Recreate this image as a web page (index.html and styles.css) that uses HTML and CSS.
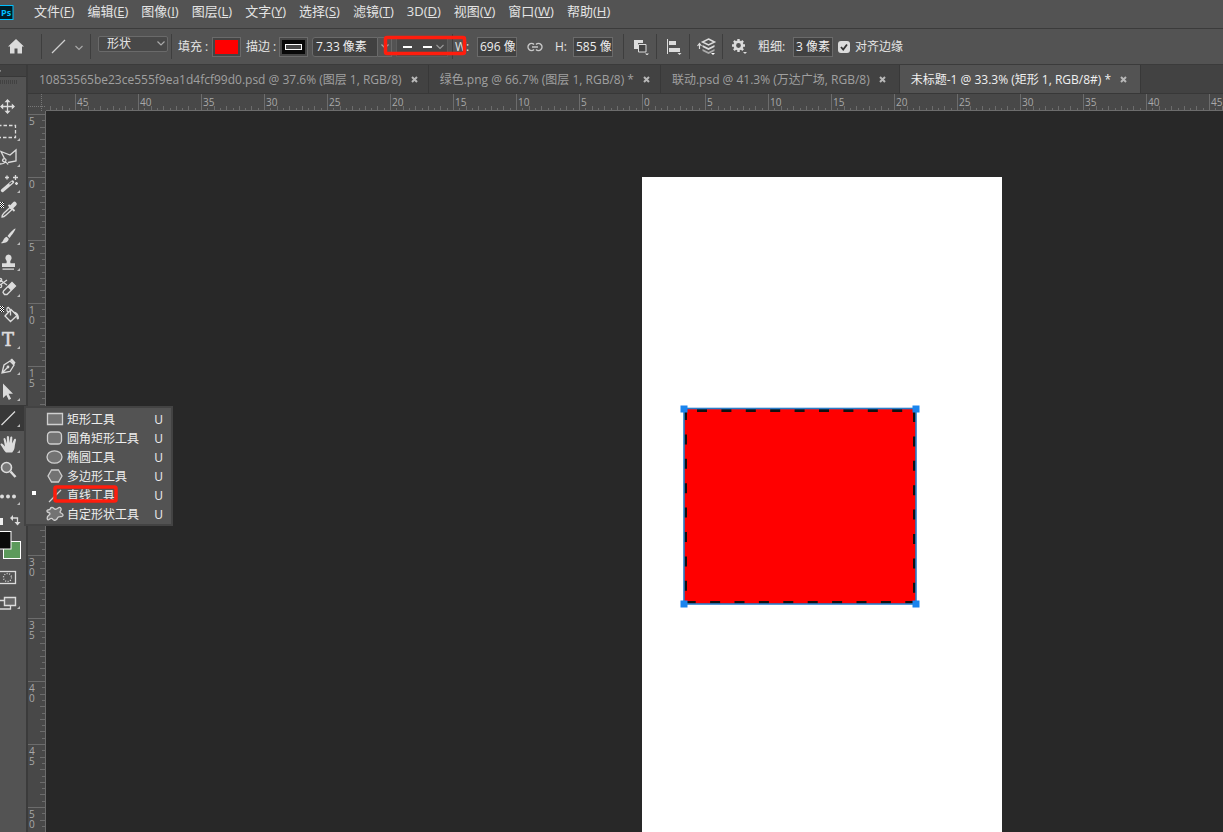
FILE: index.html
```html
<!DOCTYPE html>
<html lang="zh-CN">
<head>
<meta charset="utf-8">
<title>未标题-1 @ 33.3%</title>
<link rel="stylesheet" href="styles.css">
</head>
<body>
<div class="app">
  <header class="menubar">
    <svg class="logo" width="14" height="15" viewBox="0 0 14 15" aria-hidden="true"><rect x="-2" y=".5" width="15" height="14" fill="#001d26" stroke="#00c0ff"/><text x="1" y="11" class="logo-text">Ps</text></svg>
    <nav class="menus">
      <button>文件(<u>F</u>)</button><button>编辑(<u>E</u>)</button><button>图像(<u>I</u>)</button><button>图层(<u>L</u>)</button><button>文字(<u>Y</u>)</button><button>选择(<u>S</u>)</button><button>滤镜(<u>T</u>)</button><button>3D(<u>D</u>)</button><button>视图(<u>V</u>)</button><button>窗口(<u>W</u>)</button><button>帮助(<u>H</u>)</button>
    </nav>
  </header>

  <section class="options">
    <button class="icon home" aria-label="主页"><svg width="16" height="15" viewBox="0 0 16 15"><path d="M8 0 0 7.500h2V14.500h4.500V9.500h3v5H14V7.500h2z" fill="#dcdcdc"/></svg></button>
    <i class="sep sep-home"></i>
    <button class="icon preset" aria-label="工具预设"><svg width="32" height="16" viewBox="0 0 32 16" fill="none"><path d="M1 14 14 1" stroke="#d0d0d0" stroke-width="1.300"/><path d="m24.500 7 3.500 3.500L31.500 7" stroke="#a8a8a8" stroke-width="1.200"/></svg></button>
    <i class="sep sep-preset"></i>
    <span class="mode"><select aria-label="工具模式"><option>形状</option></select><svg class="chev" width="8" height="5" viewBox="0 0 8 5"><path d="M.5.5 4 4 7.500.5"/></svg></span>
    <i class="sep sep-mode"></i>
    <label class="cap cap-fill" for="fill">填充 :</label>
    <button class="swatch" id="fill"><span class="fill-red"></span></button>
    <label class="cap cap-stroke" for="stroke">描边 :</label>
    <button class="swatch" id="stroke"><span class="fill-line"></span></button>
    <span class="combo"><input class="field" aria-label="描边宽度" value="7.33 像素"><button aria-label="宽度选项"><svg width="8" height="5" viewBox="0 0 8 5"><path d="M.5.5 4 4 7.500.5"/></svg></button></span>
    <button class="dash" aria-label="描边类型"><svg width="50" height="18" viewBox="0 0 50 18" fill="none"><path d="M6 9h9M26 9h9" stroke="#fff" stroke-width="2"/><path d="M39.500 7 43 10.500 46.500 7" stroke="#999" stroke-width="1.200"/></svg>
      <svg class="mark mark-dash" viewBox="0 0 83 20" width="83" height="20"><rect x="1.500" y="1.500" width="79" height="16" rx="1.500"/></svg></button>
    <i class="sep sep-dash"></i>
    <label class="cap cap-w" for="w">W:</label><input class="field size" id="w" value="696 像素">
    <button class="icon link" aria-label="链接"><svg width="16" height="10" viewBox="0 0 16 10" fill="none" stroke="#c8c8c8" stroke-width="1.500"><path d="M7 2.500A3.500 3.500 0 1 0 7 7.500M9 2.500a3.500 3.500 0 1 1 0 5M5 5h6"/></svg></button>
    <label class="cap cap-h" for="h">H:</label><input class="field size" id="h" value="585 像素">
    <i class="sep sep-size"></i>
    <button class="icon tool-btn" aria-label="路径操作"><svg width="16" height="16" viewBox="0 0 16 16"><path d="M1 1h9v3H5v6H1z" fill="#dcdcdc"/><path d="M5.500 5.500h7.500V13H5.500z" fill="#444" stroke="#dcdcdc"/><path d="M12 14.500h4l-2 2z" fill="#ddd"/></svg></button>
    <i class="sep sep-op"></i>
    <button class="icon tool-btn" aria-label="路径对齐"><svg width="16" height="16" viewBox="0 0 16 16"><path d="M1 0h1v15H1zM3 2h7v4H3zM3 9h11v4H3z" fill="#dcdcdc"/><path d="M11.500 14h4l-2 2z" fill="#ddd"/></svg></button>
    <i class="sep sep-op"></i>
    <button class="icon arrange" aria-label="路径排列"><svg width="20" height="17" viewBox="0 0 20 17"><path d="M2.500 11V6M.5 8l2-2.500 2 2.500" fill="none" stroke="#dcdcdc" stroke-width="1.200"/><path d="m11.500 1 6 3-6 3-6-3z" fill="none" stroke="#dcdcdc" stroke-width="1.500"/><path d="m5.500 7 6 3 6-3v2l-6 3-6-3z" fill="#dcdcdc"/><path d="m5.500 11 6 3 6-3v2l-6 3-6-3z" fill="#aaa"/><path d="M14 15h4l-2 2z" fill="#fff"/></svg></button>
    <i class="sep sep-arrange"></i>
    <button class="icon gear" aria-label="设置"><svg width="17" height="17" viewBox="0 0 17 17"><g fill="none" stroke="#dcdcdc"><circle cx="7.500" cy="7.500" r="3.700" stroke-width="2.600"/><path d="M7.500 1v2.500M7.500 11.500V14M1 7.500h2.500M11.500 7.500H14M2.900 2.900l1.700 1.700M10.400 10.400l1.700 1.700M12.100 2.900l-1.700 1.700M4.600 10.400l-1.700 1.700" stroke-width="2.400"/></g><path d="M12 14h4l-2 2z" fill="#ddd"/></svg></button>
    <label class="cap cap-weight" for="weight">粗细:</label><input class="field size weight" id="weight" value="3 像素">
    <label class="check"><input type="checkbox" checked><svg width="12" height="12" viewBox="0 0 12 12"><path d="m3 6 2.200 2.500L9 3.500"/></svg><span>对齐边缘</span></label>
  </section>

  <main class="work">
    <aside class="tools">
      <div class="tools-head"><svg width="26" height="11" viewBox="0 0 26 11"><path d="m-2 8 3-2.500" stroke="#bbb" fill="none"/></svg></div>
      <div class="grip"></div>
      <button aria-label="移动"><svg viewBox="0 0 26 26"><path class="ln" d="M7.500 7v13M1 13.500h13"/><path class="so" d="m7.500 6 3 3.200h-6zM7.500 21l3-3.200h-6zM0 13.500l3.200-3v6zM15 13.500l-3.200-3v6z"/></svg></button>
      <button class="more" aria-label="选框"><svg viewBox="0 0 26 26"><rect class="ln" x="-2" y="6.500" width="17.500" height="12" stroke-dasharray="3.500 2"/></svg></button>
      <button class="more" aria-label="套索"><svg viewBox="0 0 26 26"><path class="ln" d="M4.500 13.500 1 6.500l9 3.500 6-5v11l-8 1.500"/><path class="ln" d="M0 19c3 0 6-1.500 6-4 0-2-3.500-1.500-3.500.5S7 16 8 19.500"/></svg></button>
      <button class="more" aria-label="魔棒"><svg viewBox="0 0 26 26"><path d="m2.500 19.500 10-8.500" stroke="#dcdcdc" stroke-width="3.400" stroke-linecap="round"/><path d="m9.500 13.200 2.600-2.200" stroke="#555" stroke-width="1.300"/><path class="ln" d="M7 4.500v4M5 6.500h4M15.500 4v5M13 6.500h5M16.500 11v3M15 12.500h3"/></svg></button>
      <button aria-label="吸管"><svg viewBox="0 0 26 26"><path d="M0 5h4v6H0z" fill="#111"/><path d="M0 5h1v1H0zM2 5h1v1H2zM1 6h1v1H1zM3 6h1v1H3zM0 7h1v1H0zM2 7h1v1H2zM1 8h1v1H1zM3 8h1v1H3zM0 9h1v1H0zM2 9h1v1H2zM1 10h1v1H1zM3 10h1v1H3z" fill="#fff"/><path class="ln" d="M2 20c0-2 1-3 2-4l6-5.500 2 2-6 5.500c-1 1-2 2-4 2z"/><path d="m11.500 10 3-3" stroke="#dcdcdc" stroke-width="4.500" stroke-linecap="round"/><path d="m8.500 8 6 6" stroke="#dcdcdc" stroke-width="1.800"/></svg></button>
      <button class="more" aria-label="画笔"><svg viewBox="0 0 26 26"><path class="so" d="M15.500 5.500c.5 1-4 7-6 9.500l-2-2c2-3 7-8 8-7.500zM6.700 13.800l2 2c0 3-4 5-8 4.200 3-1 2.500-5.500 6-6.200z"/></svg></button>
      <button class="more" aria-label="图章"><svg viewBox="0 0 26 26"><path class="so" d="M8.500 5.500a3.500 3.500 0 0 1 2.500 5.500c-1 1.200-.8 2-.5 3.200H15v3.800H2v-3.800h4.500c.3-1.200.5-2-.5-3.200A3.500 3.500 0 0 1 8.500 5.500zM2.500 19.500h11.500v1.300H2.500z"/></svg></button>
      <button class="more" aria-label="橡皮擦"><svg viewBox="0 0 26 26"><path class="ln" d="m3.500 16 8.500-8.500 3.500 3.500L7 19.500H4.500l-1.500-2z"/><path class="so" d="m7.500 12 4.500-4.500 3.500 3.500-4.500 4.500z"/><path class="ln" d="m0 5 7 5M0 10l7-5"/><circle class="ln" cx="0" cy="5" r="1.700"/><circle class="ln" cx="0" cy="11" r="1.700"/></svg></button>
      <button aria-label="油漆桶"><svg viewBox="0 0 26 26"><path d="M0 5h4v6H0z" fill="#111"/><path d="M0 5h1v1H0zM2 5h1v1H2zM1 6h1v1H1zM3 6h1v1H3zM0 7h1v1H0zM2 7h1v1H2zM1 8h1v1H1zM3 8h1v1H3zM0 9h1v1H0zM2 9h1v1H2zM1 10h1v1H1zM3 10h1v1H3z" fill="#fff"/><path class="ln" d="m5 15 6-6.500 6 6-6.500 6zM10.500 14.500V9L8.500 6.500C6.500 6 6.500 10 8 11.500"/><path class="so" d="M13 10.500c4 0 6 3 6 7-1.500 2.500-3 0-2.500-2.500z"/></svg></button>
      <button class="more" aria-label="文字"><svg viewBox="0 0 26 26"><text x="2" y="19" class="tee">T</text></svg></button>
      <button class="more" aria-label="钢笔"><svg viewBox="0 0 26 26"><path class="ln" d="M2 20 4 12l6-4 4 4-4 6.500zM2 20l5.500-5.500"/><circle class="so" cx="8" cy="14" r="1.400"/><path class="so" d="m10 7 2-1.500 3.500 4L14 12z"/></svg></button>
      <button class="more" aria-label="选择"><svg viewBox="0 0 26 26"><path class="so" d="M3 4.500v14.500l3.300-3 2.500 5 2.300-1.200-2.600-5H13z"/></svg></button>
      <button class="more active" aria-label="直线"><svg viewBox="0 0 26 26"><path class="ln" d="M1.500 20 15 6.500"/></svg></button>
      <button class="more" aria-label="抓手"><svg viewBox="0 0 26 26"><path class="so" d="M6 21.500c-2-2-3.500-5-5.500-7.800 0-1.400 1.600-1.400 2.400-.4L5 15.500 3.500 8c.2-1.200 1.700-1.200 2 0L7 12.500 6.800 6c.3-1.300 2-1.300 2.200 0l.5 6 .8-5.800c.4-1.200 2-1 2 .3l-.2 6L14 8.500c.6-1.200 2.200-.6 2 .6-.6 2.400-1 4.400-1.400 7.400-.3 2-1.200 3.500-2.400 5z"/></svg></button>
      <button aria-label="缩放"><svg viewBox="0 0 26 26"><circle cx="6.500" cy="10.500" r="5" fill="#777" stroke="#dcdcdc" stroke-width="1.600"/><path d="m10.500 14.500 5 5.500" stroke="#dcdcdc" stroke-width="2.500"/></svg></button>
      <button class="more" aria-label="更多"><svg viewBox="0 0 26 26"><g class="so"><circle cx="2" cy="13.500" r="2"/><circle cx="8" cy="13.500" r="2"/><circle cx="14" cy="13.500" r="2"/></g></svg></button>
      <div class="colors"><svg width="26" height="52" viewBox="0 0 26 52"><path d="M0 9h3v7H0z" fill="#eee"/><path class="ln" d="M12 9h5.500v6"/><path class="so" d="m13 6-3 3 3 3zM14.500 13h6l-3 3.500z"/><rect x="3.500" y="32.500" width="17" height="17" fill="#5c9a5b" stroke="#fff"/><rect x="-7.500" y="22.500" width="18.500" height="17.500" fill="#0b0b0b" stroke="#fff"/></svg></div>
      <button aria-label="快速蒙版"><svg viewBox="0 0 26 26"><rect class="ln" x="-2" y="10.500" width="17.500" height="12"/><circle class="ln" cx="7.500" cy="16.500" r="4" stroke-dasharray="1 1.500"/></svg></button>
      <button class="more" aria-label="屏幕模式"><svg viewBox="0 0 26 26"><path d="M-2 13.500h12.500V22H-2z" class="ln"/><path d="M4.500 10.500h11v8h-11z" fill="#666" stroke="#dcdcdc" stroke-width="1.400"/></svg></button>
    </aside>

    <section class="document">
      <div class="tabs">
        <div class="tab"><span>10853565be23ce555f9ea1d4fcf99d0.psd @ 37.6% (图层 1, RGB/8)</span><button aria-label="关闭"><svg viewBox="0 0 7 7"><path d="m1 1 5 5M6 1 1 6"/></svg></button></div>
        <div class="tab"><span>绿色.png @ 66.7% (图层 1, RGB/8) *</span><button aria-label="关闭"><svg viewBox="0 0 7 7"><path d="m1 1 5 5M6 1 1 6"/></svg></button></div>
        <div class="tab"><span>联动.psd @ 41.3% (万达广场, RGB/8)</span><button aria-label="关闭"><svg viewBox="0 0 7 7"><path d="m1 1 5 5M6 1 1 6"/></svg></button></div>
        <div class="tab current"><span>未标题-1 @ 33.3% (矩形 1, RGB/8#) *</span><button aria-label="关闭"><svg viewBox="0 0 7 7"><path d="m1 1 5 5M6 1 1 6"/></svg></button></div>
      </div>
      <div class="stage">
        <svg class="corner" viewBox="0 0 18 17"><path d="M13.500 0v17M0 12.500h18" stroke="#777" stroke-dasharray="1 1"/></svg>
        <svg class="ruler ruler-x">
          <defs><pattern id="tx" x="29" width="63" height="17" patternUnits="userSpaceOnUse"><path d="M.5 0v17M6.500 14v3M13.500 12v5M19.500 14v3M25.500 12v5M32.500 14v3M38.500 12v5M44.500 14v3M50.500 12v5M57.500 14v3"/></pattern></defs>
          <rect width="100%" height="17" fill="url(#tx)"/>
          <text x="31" y="12">45</text><text x="94" y="12">40</text><text x="157" y="12">35</text><text x="220" y="12">30</text><text x="283" y="12">25</text><text x="346" y="12">20</text><text x="409" y="12">15</text><text x="472" y="12">10</text><text x="535" y="12">5</text><text x="598" y="12">0</text><text x="661" y="12">5</text><text x="724" y="12">10</text><text x="787" y="12">15</text><text x="850" y="12">20</text><text x="913" y="12">25</text><text x="976" y="12">30</text><text x="1039" y="12">35</text><text x="1102" y="12">40</text><text x="1165" y="12">45</text>
        </svg>
        <svg class="ruler ruler-y">
          <defs><pattern id="ty" y="3" width="18" height="63" patternUnits="userSpaceOnUse"><path d="M0 .5h18M14 6.500h4M12 13.500h6M14 19.500h4M12 25.500h6M14 32.500h4M12 38.500h6M14 44.500h4M12 50.500h6M14 57.500h4"/></pattern></defs>
          <rect width="18" height="100%" fill="url(#ty)"/>
          <text x="1" y="14">5</text><text x="1" y="77">0</text><text x="1" y="140">5</text>
          <text x="1" y="203">1<tspan x="1" dy="10">0</tspan></text><text x="1" y="266">1<tspan x="1" dy="10">5</tspan></text><text x="1" y="329">2<tspan x="1" dy="10">0</tspan></text><text x="1" y="392">2<tspan x="1" dy="10">5</tspan></text><text x="1" y="455">3<tspan x="1" dy="10">0</tspan></text><text x="1" y="518">3<tspan x="1" dy="10">5</tspan></text><text x="1" y="581">4<tspan x="1" dy="10">0</tspan></text><text x="1" y="644">4<tspan x="1" dy="10">5</tspan></text><text x="1" y="707">5<tspan x="1" dy="10">0</tspan></text>
        </svg>
        <div class="canvas">
          <div class="artboard">
            <svg class="shape" width="242" height="206" viewBox="0 0 242 206">
              <rect x="5" y="5" width="232" height="195" fill="#f00"/>
              <g fill="none" stroke="#111" stroke-width="3" stroke-dasharray="10 14.400"><path d="M18 6.500h218"/><path d="M6.500 7v193" stroke-dashoffset="1"/><path d="M8 198.500h228" stroke-dashoffset="1.300"/><path d="M235.500 8v192" stroke-dashoffset="0"/></g>
              <rect x="5" y="4.500" width="232" height="195.500" fill="none" stroke="#2a7cc8" stroke-width="1.600"/>
              <path d="M1.500 1.500h7v7h-7zM233.500 1.500h7v7h-7zM1.500 196.500h7v7h-7zM233.500 196.500h7v7h-7z" fill="#1a84ee"/>
            </svg>
          </div>
        </div>
      </div>
    </section>

    <div class="flyout" role="menu">
      <button role="menuitem"><svg viewBox="0 0 18 16"><path d="M1.500 2.500h15v11h-15z"/></svg><span>矩形工具</span><kbd>U</kbd></button>
      <button role="menuitem"><svg viewBox="0 0 18 16"><rect x="1.500" y="2" width="14" height="12" rx="3.500"/></svg><span>圆角矩形工具</span><kbd>U</kbd></button>
      <button role="menuitem"><svg viewBox="0 0 18 16"><ellipse cx="8.500" cy="8" rx="7.500" ry="6.200"/></svg><span>椭圆工具</span><kbd>U</kbd></button>
      <button role="menuitem"><svg viewBox="0 0 18 16"><path d="M5.500 2h7L16 8l-3.500 6h-7L2 8z"/></svg><span>多边形工具</span><kbd>U</kbd></button>
      <button role="menuitem" class="chosen"><svg viewBox="0 0 18 16"><path d="M3 15 15 3"/></svg><span>直线工具</span><kbd>U</kbd><svg class="mark mark-line" viewBox="0 0 66 18"><rect x="2" y="2" width="61" height="14" rx="1.500"/></svg></button>
      <button role="menuitem"><svg viewBox="0 0 18 16"><path d="M5 1.500c3-1 3 3 5.500 1.500S14 .5 15 2.500 12.500 6 15 7s2.500 3 1 3.500-4-.5-4.500 1.500S8 15 7 13.500 5 12 3 13.500.5 11 2.500 9.500 4.500 7 2.500 6.500.5 4 2 4 4.500 4 5 1.500z"/></svg><span>自定形状工具</span><kbd>U</kbd></button>
    </div>
  </main>
</div>
</body>
</html>
```

FILE: styles.css
```css
* { box-sizing: border-box; }
body {
  margin: 0;
  background: #535353;
  color: #e4e4e4;
  font-family: "Open Sans", "Noto Sans CJK SC", sans-serif;
  font-size: 12px;
}
button, input, select, kbd { font: inherit; color: inherit; }
button { margin: 0; padding: 0; border: 0; background: none; }
svg { display: block; flex: none; }
.app { display: flex; flex-direction: column; height: 100vh; overflow: hidden; }

.menubar { display: flex; align-items: center; height: 29px; flex: none; padding-bottom: 4px; border-bottom: 1px solid #3b3b3b; }
.logo-text { font: bold 9px "Open Sans", sans-serif; fill: #00c0ff; }
.menus { display: flex; margin-left: 14px; }
.menus button { padding: 0 7px 2px 6px; font-size: 13px; line-height: 20px; white-space: nowrap; }
.menus u { text-underline-offset: 1px; }

.options { display: flex; align-items: center; height: 36px; flex: none; border-bottom: 1px solid #3b3b3b; line-height: 18px; white-space: nowrap; }
.options > * { flex: none; }
.sep { width: 1px; height: 25px; background: #3e3e3e; }
.home { margin-left: 8px; }
.sep-home { margin-left: 17px; }
.preset { margin-left: 9px; }
.sep-preset { margin-left: 7px; }
.mode { position: relative; margin: 0 0 5px 7px; }
.mode select { display: block; width: 70px; height: 16px; padding: 0 8px; appearance: none; background: #484848; border: 1px solid #6a6a6a; border-radius: 2px; line-height: 14px; }
.chev { position: absolute; right: 3px; top: 5px; }
.chev path, .combo path { fill: none; stroke: #aaa; stroke-width: 1.2; }
.sep-mode { margin-left: 3px; }
.cap-fill { width: 34px; margin-left: 6px; }
.cap-stroke { width: 33px; margin-left: 5px; }
.swatch { display: flex; width: 29px; height: 20px; padding: 2px; border: 1px solid #6a6a6a; background: #444; }
.swatch span { flex: 1; align-self: stretch; }
.fill-red { background: #f00; }
.fill-line { display: flex; padding: 4px 3px; background: #080808; }
.fill-line::before { content: ""; flex: 1; background: #484848; border: 1px solid #fff; }
.combo { display: flex; width: 80px; height: 20px; margin-left: 4px; }
.field { min-width: 0; height: 20px; padding: 0 0 2px 2px; border: 1px solid #6a6a6a; background: #414141; border-radius: 0; outline: 0; color: #eee; }
.combo .field { width: 66px; padding-left: 3px; border-radius: 3px 0 0 3px; }
.combo button { display: grid; place-items: center; width: 14px; border: 1px solid #6a6a6a; border-left: 0; }
.dash { position: relative; width: 50px; height: 18px; margin-left: 5px; background: #484848; outline: 1px solid #5c5c5c; }
.mark { position: absolute; overflow: visible; }
.mark rect { fill: none; stroke: #ff1d0d; stroke-width: 3.5; }
.mark-dash { left: -13px; top: -2px; z-index: 2; }
.sep-dash { margin-left: 5px; }
.cap-w { width: 22px; margin-left: 2px; }
.size { width: 40px; }
.link { margin-left: 10px; }
.cap-h { width: 18px; margin-left: 12px; }
.sep-size { margin-left: 10px; }
.tool-btn { margin-left: 9px; }
.sep-op { margin-left: 7px; }
.arrange { margin-left: 7px; }
.sep-arrange { margin-left: 5px; }
.gear { margin-left: 8px; }
.cap-weight { width: 35px; margin-left: 10px; }
.check { position: relative; display: flex; align-items: center; gap: 5px; margin-left: 5px; }
.check input { width: 12px; height: 12px; margin: 0; appearance: none; background: #dcdcdc; border-radius: 3px; }
.check svg { position: absolute; left: 0; }
.check path { fill: none; stroke: #333; stroke-width: 1.8; }

.work { position: relative; display: flex; flex: 1; min-height: 0; }
.tools { width: 28px; flex: none; border-right: 2px solid #3b3b3b; }
.tools-head { height: 12px; background: #424242; border-bottom: 1px solid #383838; }
.grip { width: 17px; height: 4px; margin: 3px 0 9px; background: repeating-linear-gradient(90deg, #424242 0 1px, #535353 1px 2px); }
.tools button { position: relative; display: block; width: 26px; height: 26px; }
.tools button svg { width: 26px; height: 26px; }
.tools .more::after { content: ""; position: absolute; left: 17px; top: 19px; border-left: 3px solid transparent; border-bottom: 3px solid #bbb; }
.tools .active { background: #383838; }
.colors { height: 52px; }
.ln { fill: none; stroke: #dcdcdc; stroke-width: 1.3; }
.so { fill: #dcdcdc; }
.tee { font: 18px "DejaVu Serif", serif; fill: #dcdcdc; stroke: #dcdcdc; stroke-width: .6; }

.document { flex: 1; min-width: 0; display: flex; flex-direction: column; }
.tabs { display: flex; flex: none; height: 29px; background: #424242; border-bottom: 1px solid #383838; }
.tab { display: flex; align-items: center; flex: none; gap: 9px; padding: 0 10px 0 11px; border-right: 1px solid #383838; color: #a0a0a0; line-height: 18px; white-space: nowrap; }
.tab span { padding-top: 1px; }
.tab svg { width: 7px; height: 7px; }
.tab path { fill: none; stroke: #b8b8b8; stroke-width: 2; }
.tab:nth-child(n+3) { padding-right: 13px; }
.tab.current { background: #535353; color: #f0f0f0; }
.stage { display: grid; flex: 1; min-height: 0; grid-template: 17px minmax(0, 1fr) / 18px minmax(0, 1fr); }
.corner { width: 18px; height: 17px; background: #484848; }
.ruler { width: 100%; height: 100%; background: #484848; }
.ruler path { stroke: #6c6c6c; fill: none; }
.ruler text { font: 10px "Open Sans", sans-serif; fill: #a8a8a8; }
.ruler-x { border-bottom: 1px solid #6c6c6c; }
.ruler-y { border-right: 1px solid #6c6c6c; }
.canvas { position: relative; overflow: hidden; background: #282828; }
.artboard { position: absolute; left: 596px; top: 66px; bottom: 0; width: 360px; background: #fff; }
.shape { position: absolute; left: 37px; top: 227px; }

.flyout { position: absolute; left: 24px; top: 341px; display: flex; flex-direction: column; width: 149px; padding: 1px 1px 1px 0; background: #535353; border: 2px solid #434343; }
.flyout button { position: relative; display: flex; align-items: center; height: 19px; padding: 0 7px 0 20px; line-height: 19px; text-align: left; color: #eee; }
.flyout button > svg:first-child { width: 18px; height: 16px; fill: #737373; stroke: #cfcfcf; stroke-width: 1.3; }
.flyout span { flex: 1; margin-left: 3px; white-space: nowrap; }
.flyout span, .flyout kbd { padding-top: 2px; }
.chosen::before { content: ""; position: absolute; left: 6px; top: 6px; width: 4px; height: 4px; background: #fff; }
.flyout .mark-line { left: 27px; top: 0; width: 66px; height: 18px; }
```
